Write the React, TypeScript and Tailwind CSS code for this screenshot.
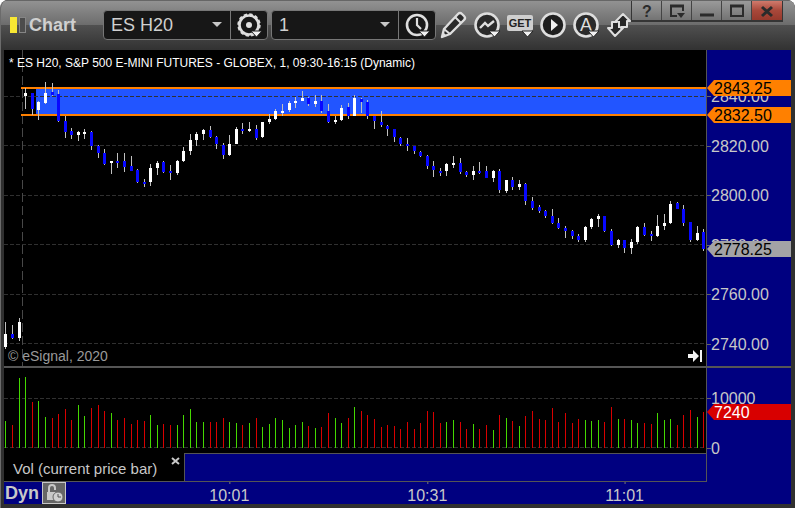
import type { ReactNode } from "react";

// x, high, body top, body bottom, low, up (1) or down (0), top of the volume bar
type Bar = [number, number, number, number, number, 0 | 1, number];

const bars: Bar[] = [
  [5, 322, 334, 347, 349, 1, 421],
  [12, 325, 334, 338, 339, 0, 425],
  [19, 318, 322, 338, 341, 1, 378],
  [25, 88, 93, 96, 109, 1, 377],
  [32, 93, 93, 109, 115, 0, 402],
  [38, 101, 102, 110, 120, 1, 401],
  [45, 82, 93, 103, 104, 1, 417],
  [52, 83, 92, 95, 96, 0, 418],
  [58, 90, 94, 121, 122, 0, 414],
  [65, 116, 121, 132, 138, 0, 409],
  [71, 128, 131, 135, 139, 0, 420],
  [78, 131, 132, 135, 141, 1, 405],
  [84, 129, 132, 134, 139, 1, 416],
  [91, 131, 132, 146, 150, 0, 408],
  [98, 145, 146, 153, 158, 0, 405],
  [104, 149, 153, 164, 165, 0, 411],
  [111, 161, 161, 163, 174, 1, 413],
  [117, 153, 161, 163, 168, 0, 420],
  [124, 153, 161, 167, 172, 0, 418],
  [131, 156, 166, 171, 171, 0, 424],
  [137, 169, 170, 182, 183, 0, 420],
  [144, 179, 182, 184, 187, 0, 421],
  [150, 164, 168, 182, 186, 1, 415],
  [157, 161, 163, 168, 175, 1, 425],
  [163, 161, 162, 172, 173, 0, 424],
  [170, 165, 171, 173, 180, 0, 425],
  [177, 160, 161, 173, 175, 1, 425],
  [183, 147, 151, 161, 162, 1, 415],
  [190, 134, 140, 151, 155, 1, 409],
  [196, 132, 134, 140, 146, 1, 422],
  [203, 129, 130, 134, 140, 1, 422],
  [210, 126, 130, 137, 138, 0, 422],
  [216, 136, 137, 144, 149, 0, 422],
  [223, 143, 145, 155, 159, 0, 418],
  [229, 135, 144, 155, 156, 1, 422],
  [236, 127, 129, 144, 144, 1, 423],
  [242, 123, 129, 131, 134, 0, 425],
  [249, 122, 129, 131, 132, 1, 423],
  [256, 125, 129, 138, 140, 0, 418],
  [262, 122, 122, 137, 138, 1, 427],
  [269, 114, 119, 122, 124, 1, 424],
  [275, 109, 111, 119, 120, 1, 418],
  [282, 104, 111, 113, 116, 1, 420],
  [289, 101, 103, 110, 112, 1, 428],
  [295, 97, 101, 103, 108, 1, 425],
  [302, 91, 98, 101, 101, 1, 422],
  [308, 97, 98, 104, 106, 0, 426],
  [315, 95, 101, 104, 107, 1, 428],
  [321, 95, 101, 111, 113, 0, 427],
  [328, 104, 111, 122, 123, 0, 413],
  [335, 116, 120, 122, 124, 1, 418],
  [341, 105, 108, 120, 121, 1, 423],
  [348, 103, 107, 116, 119, 0, 418],
  [354, 95, 98, 116, 116, 1, 407],
  [361, 98, 99, 102, 113, 0, 411],
  [367, 100, 102, 116, 119, 0, 415],
  [374, 116, 116, 121, 129, 0, 419],
  [381, 111, 122, 125, 127, 0, 427],
  [387, 125, 126, 129, 136, 0, 425],
  [394, 129, 129, 137, 142, 0, 426],
  [400, 137, 138, 144, 146, 0, 429],
  [407, 138, 144, 146, 151, 0, 422],
  [414, 146, 146, 151, 154, 0, 429],
  [420, 151, 152, 156, 157, 0, 423],
  [427, 155, 156, 166, 169, 0, 411],
  [433, 161, 166, 170, 177, 0, 412],
  [440, 168, 171, 173, 176, 0, 423],
  [446, 163, 164, 171, 176, 1, 422],
  [453, 156, 163, 165, 168, 1, 420],
  [460, 158, 163, 172, 174, 0, 422],
  [466, 171, 172, 175, 177, 0, 429],
  [473, 166, 171, 175, 180, 1, 424],
  [479, 162, 171, 173, 174, 0, 429],
  [486, 166, 171, 178, 178, 0, 425],
  [493, 170, 171, 178, 182, 1, 430],
  [499, 169, 171, 190, 193, 0, 415],
  [506, 180, 180, 191, 193, 1, 418],
  [512, 177, 180, 187, 190, 0, 421],
  [519, 180, 184, 187, 190, 1, 426],
  [525, 183, 184, 201, 205, 0, 416],
  [532, 197, 201, 208, 210, 0, 411],
  [539, 205, 207, 211, 213, 0, 419],
  [545, 210, 211, 216, 218, 0, 420],
  [552, 209, 216, 223, 224, 0, 408],
  [558, 218, 223, 228, 229, 0, 422],
  [565, 226, 228, 231, 238, 0, 413],
  [572, 230, 231, 236, 239, 0, 423],
  [578, 234, 236, 240, 242, 0, 419],
  [585, 226, 227, 240, 242, 1, 420],
  [591, 218, 219, 227, 229, 1, 421],
  [598, 214, 216, 219, 227, 1, 420],
  [604, 216, 216, 231, 232, 0, 422],
  [611, 229, 231, 245, 246, 0, 407],
  [618, 239, 240, 245, 248, 1, 419],
  [624, 240, 240, 248, 253, 0, 419],
  [631, 239, 242, 248, 254, 1, 420],
  [637, 226, 227, 242, 244, 1, 423],
  [644, 223, 227, 235, 236, 0, 423],
  [651, 231, 234, 236, 241, 0, 424],
  [657, 215, 226, 236, 237, 1, 413],
  [664, 214, 223, 226, 230, 1, 420],
  [670, 201, 204, 223, 224, 1, 419],
  [677, 202, 203, 209, 209, 0, 425],
  [683, 205, 209, 223, 226, 0, 415],
  [690, 222, 222, 240, 242, 0, 410],
  [697, 226, 233, 240, 241, 1, 417],
  [703, 229, 232, 249, 251, 0, 412],
];

const priceLabels = [
  { y: 96, text: "2840.00" },
  { y: 146, text: "2820.00" },
  { y: 195, text: "2800.00" },
  { y: 245, text: "2780.00" },
  { y: 294, text: "2760.00" },
  { y: 344, text: "2740.00" },
];

const priceTags = [
  { y: 88, text: "2843.25", fill: "#ff8000", color: "#000" },
  { y: 115, text: "2832.50", fill: "#ff8000", color: "#000" },
  { y: 249, text: "2778.25", fill: "#a3a3a6", color: "#000" },
];

const times = [
  { x: "32.1%", text: "10:01" },
  { x: "60.3%", text: "10:31" },
  { x: "88.4%", text: "11:01" },
];

export default function App() {
  return (
    <div className="flex min-h-screen flex-col overflow-hidden rounded-t-lg border-l border-[#6b6b6b] bg-[#303030] font-['Liberation_Sans',Arial,sans-serif] text-[#c8c8c8]">
      <Toolbar />
      <main className="mr-1 mb-1 ml-[3px] flex-1 bg-[#000080]">
        <section className="flex border-b-2 border-[#555]">
          <div className="relative min-w-0 flex-1 border-r border-[#555] bg-black">
            <PricePlot />
            <h2 className="absolute top-[5px] left-[5px] text-xs whitespace-nowrap text-white">
              * ES H20, S&amp;P 500 E-MINI FUTURES - GLOBEX, 1, 09:30-16:15 (Dynamic)
            </h2>
            <small className="absolute bottom-0 left-1 text-sm text-[#9a9a9a]">© eSignal, 2020</small>
            <button aria-label="Scroll to last bar" className="absolute right-[3px] bottom-[3px]">
              <svg width="16" height="14" viewBox="0 0 16 14" className="block fill-[#f4f4f4]">
                <path d="M1 5H6V1L12 7L6 13V9H1Z" />
                <rect x="13" y="1" width="2" height="12" />
              </svg>
            </button>
          </div>
          <Axis top={50} height={316} labels={priceLabels} tags={priceTags} />
        </section>

        <section className="flex">
          <div className="min-w-0 flex-1 border-r border-b border-[#555] bg-black">
            <VolumePlot />
            <div className="flex h-7">
              <div className="flex w-[180px] justify-between pr-1 pl-[9px]">
                <span className="self-end pb-px text-[15px] whitespace-nowrap">Vol (current price bar)</span>
                <button aria-label="Close study" className="mt-1 h-2">
                  <svg width="9" height="8" viewBox="0 0 9 8" className="block">
                    <path d="M1 1L8 7M8 1L1 7" stroke="#c8c8c8" strokeWidth="2" />
                  </svg>
                </button>
              </div>
              <div className="flex-1 border-t border-l border-[#555] bg-[#000080]" />
            </div>
          </div>
          <Axis
            top={368}
            height={113}
            labels={[
              { y: 398, text: "10000" },
              { y: 448, text: "0" },
            ]}
            tags={[{ y: 412, text: "7240", fill: "#d80000", color: "#fff" }]}
          />
        </section>

        <TimeAxis />
      </main>
    </div>
  );
}

function Toolbar() {
  return (
    <header className="flex h-[50px] items-start justify-between border-t border-[#666] bg-[linear-gradient(#929292_0px,#6c6c6c_24px,#505050_24px,#333_48px)]">
      <div className="flex h-12 shrink-0 items-center">
        <svg width="18" height="16" viewBox="0 0 18 16" className="ml-2">
          <rect x="1" width="7" height="16" fill="#f7e733" />
          <rect x="10.500" y="0.500" width="6" height="15" fill="#4c4c4c" stroke="#858585" />
        </svg>
        <h1 className="ml-[2px] w-[74px] text-lg font-bold text-[#d0d0d0]">Chart</h1>

        <Picker label="Symbol" value="ES H20" action="Symbol settings">
          <circle cx="14" cy="14" r="9.500" strokeWidth="2.600" />
          <circle cx="14" cy="14" r="10.800" strokeWidth="1.800" strokeDasharray="3.400 2.250" />
          <circle cx="14" cy="14" r="3" fill="#e0e0e0" stroke="none" />
          <MenuMark />
        </Picker>
        <Picker label="Interval" value="1" action="Interval settings">
          <circle cx="14" cy="14" r="10" strokeWidth="2.600" />
          <path d="M14 7V14L18 18" strokeWidth="2.200" />
          <MenuMark />
        </Picker>

        <div className="flex items-center gap-[5px] pl-px">
          <IconButton label="Draw">
            <path d="M2 26L4 18L18 3Q20 1 22 3L24 5Q26 7 24 9L10 23Z" fill="#2a2a2a" strokeWidth="2.400" strokeLinejoin="round" />
            <path d="M15 6L21 12M4 18L10 23" strokeWidth="2" />
            <path d="M2 26L3 21L7 25Z" fill="#dedede" stroke="none" />
          </IconButton>
          <IconButton label="Studies">
            <circle cx="14" cy="14" r="11.500" fill="#2a2a2a" strokeWidth="2.600" />
            <path d="M7 17L12 12L15 15L21 10" strokeWidth="2.400" />
            <MenuMark />
          </IconButton>
          <IconButton label="Get">
            <rect x="1" y="4" width="26" height="16" rx="2" fill="#cfcfcf" stroke="none" />
            <text x="14" y="16" textAnchor="middle" fill="#222" stroke="none" className="text-[11px] font-bold">
              GET
            </text>
            <MenuMark />
          </IconButton>
          <IconButton label="Playback">
            <circle cx="14" cy="14" r="11.500" fill="#1f1f1f" strokeWidth="2.600" />
            <path d="M12 8L19 14L12 20Z" fill="#f0f0f0" stroke="none" />
          </IconButton>
          <IconButton label="Annotate">
            <circle cx="14" cy="14" r="11.500" fill="#2a2a2a" strokeWidth="2.600" />
            <text x="14" y="20" textAnchor="middle" fill="#dedede" stroke="none" className="text-lg">
              A
            </text>
            <MenuMark />
          </IconButton>
          <IconButton label="Link">
            <path
              d="M18 3L25 10H22V16H16V17H18L10 25L3 17H7V11H12V10H11Z"
              fill="#262626"
              strokeWidth="2"
              strokeLinejoin="round"
            />
            <path d="M14 10V17" strokeWidth="2" />
          </IconButton>
        </div>
      </div>

      <div className="mr-3 -ml-1 flex h-[21px] shrink-0 border-x border-b-2 border-[#353535]">
        <WindowButton label="Help">
          <text x="10" y="16" textAnchor="middle" fill="#2b2b2b" stroke="none" className="text-base font-bold">
            ?
          </text>
        </WindowButton>
        <WindowButton label="Window menu">
          <path d="M10 15H4V5H16V10" />
          <path d="M3 5H17" strokeWidth="3" />
          <path d="M10 12H18L14 17Z" fill="#2b2b2b" stroke="none" />
        </WindowButton>
        <WindowButton label="Minimize">
          <path d="M3 14H17" strokeWidth="3" />
        </WindowButton>
        <WindowButton label="Maximize">
          <path d="M4 5H16V15H4Z" />
          <path d="M3 5H17" strokeWidth="3" />
        </WindowButton>
        <WindowButton label="Close" close>
          <path d="M5 6L15 15M15 6L5 15" strokeWidth="3" />
        </WindowButton>
      </div>
    </header>
  );
}

function Picker({ label, value, action, children }: { label: string; value: string; action: string; children: ReactNode }) {
  return (
    <div className="mr-[3px] flex h-[30px] w-[165px] rounded-[4px] border border-[#777] bg-[#171717]">
      <label className="relative flex-1">
        <select aria-label={label} className="h-full w-full appearance-none bg-transparent pl-[7px] text-lg text-[#d0d0d0] outline-none">
          <option>{value}</option>
        </select>
        <svg width="10" height="6" viewBox="0 0 10 6" className="pointer-events-none absolute top-[11px] right-2 fill-[#c8c8c8]">
          <path d="M0 0H10L5 5Z" />
        </svg>
      </label>
      <button aria-label={action} className="flex w-[37px] items-center justify-center border-l border-[#777]">
        <svg width="28" height="28" viewBox="0 0 28 28" fill="none" stroke="#dedede">
          {children}
        </svg>
      </button>
    </div>
  );
}

function MenuMark() {
  return <path d="M16 20H27L21.500 26Z" fill="#f2f2f2" stroke="#222" strokeWidth="1" />;
}

function IconButton({ label, children }: { label: string; children: ReactNode }) {
  return (
    <button aria-label={label}>
      <svg width="28" height="28" viewBox="0 0 28 28" fill="none" stroke="#dedede" className="block">
        {children}
      </svg>
    </button>
  );
}

function WindowButton({ label, close, children }: { label: string; close?: boolean; children: ReactNode }) {
  return (
    <button
      aria-label={label}
      className={`flex w-[30px] items-center justify-center border-r border-[#444] last:border-r-0 ${
        close ? "bg-[linear-gradient(#d07a6c,#a8483a_50%,#96392c)]" : "bg-[linear-gradient(#9a9a9a,#737373)]"
      }`}
    >
      <svg width="20" height="20" viewBox="0 0 20 20" fill="none" stroke="#2b2b2b" strokeWidth="2">
        {children}
      </svg>
    </button>
  );
}

function GridLine({ y }: { y: number }) {
  return <path d={`M4 ${y + 0.5}H706`} stroke="#303030" strokeDasharray="4 2" />;
}

function PricePlot() {
  return (
    <svg viewBox="4 50 702 316" preserveAspectRatio="none" shapeRendering="crispEdges" className="block h-[316px] w-full">
      <rect x="36" y="88" width="670" height="27" fill="#2255ff" />
      {[96, 145, 195, 244, 294, 343].map((y) => (
        <GridLine key={y} y={y} />
      ))}
      <path d="M22.500 50V366" stroke="#484848" strokeDasharray="9 4" />
      <path d="M21 88H706M21 115H706" stroke="#ff8000" strokeWidth="2" />
      {bars.map(([x, high, top, bottom, low, up]) => (
        <g key={x}>
          <rect x={x} y={high} width="1" height={low - high} fill="#c0c0c0" />
          <rect x={x - 1} y={top} width="3" height={bottom - top} fill={up ? "#fff" : "#0808ff"} />
        </g>
      ))}
    </svg>
  );
}

function VolumePlot() {
  return (
    <svg viewBox="4 368 702 85" preserveAspectRatio="none" shapeRendering="crispEdges" className="block h-[85px] w-full">
      <GridLine y={398} />
      <GridLine y={447} />
      {bars.map(([x, , , , , up, top]) => (
        <rect key={x} x={x} y={top} width="1" height={448 - top} fill={up ? "#44d800" : "#d80000"} />
      ))}
    </svg>
  );
}

type Label = { y: number; text: string };
type Tag = Label & { fill: string; color: string };

function Axis({ top, height, labels, tags }: { top: number; height: number; labels: Label[]; tags: Tag[] }) {
  return (
    <svg width="84" height={height} viewBox={`0 ${top} 84 ${height}`} className="block shrink-0 text-base">
      {labels.map(({ y, text }) => (
        <g key={text}>
          <rect y={y} width="4" height="1" fill="#666" />
          <text x="4" y={y + 6} fill="#c8c8c8">
            {text}
          </text>
        </g>
      ))}
      {tags.map(({ y, text, fill, color }) => (
        <g key={text}>
          <path d={`M0 ${y}L7 ${y - 8}H84V${y + 8}H7Z`} fill={fill} />
          <text x="7" y={y + 6} fill={color}>
            {text}
          </text>
        </g>
      ))}
    </svg>
  );
}

function TimeAxis() {
  return (
    <footer className="flex h-[22px]">
      <div className="relative flex flex-1 items-center gap-[3px] pl-px">
        <span className="text-lg font-bold">Dyn</span>
        <button aria-label="Lock time template" className="border border-[#c8c8c8] bg-[#666]">
          <svg width="22" height="20" viewBox="0 0 22 20" fill="none" className="block">
            <path d="M6 10V5Q6 2 9 2Q12 2 12 5V7" stroke="#c8c8c8" strokeWidth="2" />
            <rect x="4" y="9" width="9" height="8" fill="#c8c8c8" />
            <circle cx="15" cy="14" r="5" fill="#d0d0d0" stroke="#666" />
            <path d="M15 11V14H18" stroke="#555" />
          </svg>
        </button>
        <svg className="pointer-events-none absolute inset-0 h-full w-full text-base">
          {times.map(({ x, text }) => (
            <g key={text}>
              <rect x={x} y="0" width="1" height="2" fill="#777" />
              <text x={x} y="19" textAnchor="middle" fill="#c8c8c8">
                {text}
              </text>
            </g>
          ))}
        </svg>
      </div>
      <div className="w-[85px]" />
    </footer>
  );
}
